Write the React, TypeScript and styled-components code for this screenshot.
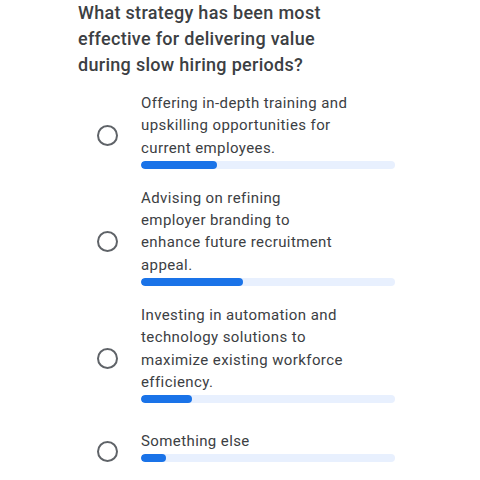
import React from "react";
import styled, { createGlobalStyle } from "styled-components";

const Global = createGlobalStyle`
  html, body { margin: 0; padding: 0; background: #ffffff; }
  body { font-family: Roboto, "Noto Sans", Arial, sans-serif; }
`;

const Page = styled.div`
  width: 480px;
  height: 480px;
  box-sizing: border-box;
  padding: 0 0 0 78px;
  overflow: hidden;
`;

const Title = styled.h1`
  margin: 0;
  width: 270px;
  font-size: 18px;
  line-height: 26px;
  font-weight: 500;
  color: #3c4043;
  letter-spacing: 0.3px;
`;

const Options = styled.div`
  margin-top: 14px;
  padding-left: 19px;
  display: flex;
  flex-direction: column;
  gap: 18px;
`;

const Row = styled.div`
  display: flex;
  align-items: center;
  min-height: 50px;
`;

const Radio = styled.span`
  flex: none;
  box-sizing: border-box;
  width: 21px;
  height: 21px;
  margin-top: 10px;
  margin-right: 23px;
  border: 2px solid #5f6368;
  border-radius: 50%;
`;

const Content = styled.div`
  width: 254px;
  display: flex;
  flex-direction: column;
  gap: 2px;
`;

const Label = styled.div`
  max-width: 207px;
  font-size: 15px;
  line-height: 22.3px;
  color: #3c4043;
  letter-spacing: 0.4px;
`;

const Track = styled.div`
  height: 8px;
  border-radius: 4px;
  background: #e8f0fe;
  overflow: hidden;
`;

const Fill = styled.div`
  height: 100%;
  border-radius: 4px;
  background: #1a73e8;
`;

const options = [
  { label: "Offering in-depth training and upskilling opportunities for current employees.", pct: 30 },
  { label: "Advising on refining employer branding to enhance future recruitment appeal.", pct: 40 },
  { label: "Investing in automation and technology solutions to maximize existing workforce efficiency.", pct: 20 },
  { label: "Something else", pct: 10 },
];

export default function App() {
  return (
    <Page>
      <Global />
      <Title>What strategy has been most effective for delivering value during slow hiring periods?</Title>
      <Options>
        {options.map((o) => (
          <Row key={o.label}>
            <Radio />
            <Content>
              <Label>{o.label}</Label>
              <Track>
                <Fill style={{ width: `${o.pct}%` }} />
              </Track>
            </Content>
          </Row>
        ))}
      </Options>
    </Page>
  );
}
